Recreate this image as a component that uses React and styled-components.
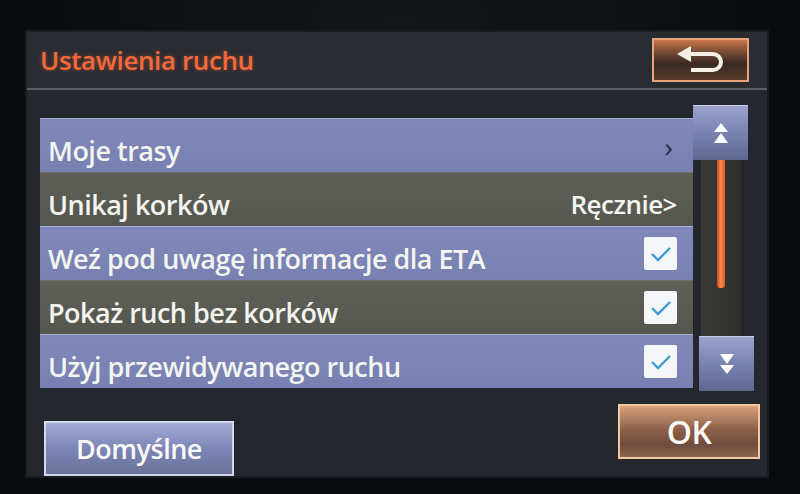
import React from 'react'
import styled, { createGlobalStyle } from 'styled-components'

const GlobalStyle = createGlobalStyle`
  html, body {
    margin: 0;
    padding: 0;
    background: #0b0c10;
  }
  body {
    font-family: "Open Sans", "Noto Sans", sans-serif;
  }
`

const Bezel = styled.div`
  width: 800px;
  height: 494px;
  background: radial-gradient(ellipse at 50% 10%, #15171c 0%, #0a0b0e 70%);
  padding: 32px 0 0 27px;
  box-sizing: border-box;
`

const Screen = styled.div`
  width: 740px;
  height: 444px;
  background: #25272e;
  display: flex;
  flex-direction: column;
  box-shadow: 0 0 0 2px #1a1b20;
`

const Header = styled.div`
  height: 58px;
  padding: 0 18px 0 13px;
  display: flex;
  align-items: center;
  justify-content: space-between;
  border-bottom: 2px solid #5d5f66;
  background: #2a2c33;
`

const Title = styled.h1`
  margin: 0;
  font-size: 26px;
  font-weight: 600;
  letter-spacing: -0.4px;
  color: #f2693a;
  text-shadow: 0 0 4px rgba(242, 105, 58, 0.45);
`

const BackButton = styled.button`
  width: 97px;
  height: 44px;
  border: 2px solid #e9a37a;
  background: linear-gradient(180deg, #c9764a 0%, #6b4430 35%, #3a2a22 60%, #5a3b2c 100%);
  display: flex;
  align-items: center;
  justify-content: center;
  padding: 0;
`

const Content = styled.div`
  display: flex;
  padding: 15px 0 0 13px;
`

const List = styled.div`
  width: 653px;
  margin-top: 13px;
  display: flex;
  flex-direction: column;
`

const Row = styled.div`
  height: 54px;
  padding: 9px 16px 0 8px;
  box-sizing: border-box;
  display: flex;
  align-items: center;
  justify-content: space-between;
  border-top: 1px solid ${p => (p.$blue ? '#a6aed6' : '#6c6e66')};
  background: ${p =>
    p.$blue
      ? 'linear-gradient(180deg, #8089b9 0%, #7780b1 100%)'
      : 'linear-gradient(180deg, #5e6058 0%, #55574f 100%)'};
`

const Label = styled.span`
  font-size: 27px;
  font-weight: 600;
  letter-spacing: -0.5px;
  color: #f4f4f0;
`

const Value = styled.span`
  font-size: 26px;
  font-weight: 600;
  letter-spacing: -0.5px;
  color: #f4f4f0;
`

const Chevron = styled.span`
  font-size: 28px;
  line-height: 1;
  color: #2c2f40;
  margin: -8px 4px 0 0;
`

const CheckBox = styled.div`
  width: 33px;
  height: 33px;
  margin-top: -9px;
  background: #f5f6f8;
  border-radius: 2px;
  display: flex;
  align-items: center;
  justify-content: center;
`

const ScrollColumn = styled.div`
  width: 62px;
  display: flex;
  flex-direction: column;
  align-items: flex-start;
`

const ScrollButton = styled.div`
  width: 55px;
  height: 54px;
  margin-left: ${p => p.$shift || 0}px;
  border-top: 1px solid #c7cde6;
  background: linear-gradient(180deg, #9aa3cc 0%, #7c86b4 45%, #5d6790 100%);
  display: flex;
  align-items: center;
  justify-content: center;
`

const Track = styled.div`
  width: 40px;
  height: 176px;
  margin-left: 8px;
  background: linear-gradient(90deg, #3a3b38 0%, #2f302e 100%);
  display: flex;
  justify-content: center;
`

const Thumb = styled.div`
  width: 8px;
  height: 128px;
  background: linear-gradient(90deg, #c9471a 0%, #ff8a4a 45%, #e2561f 100%);
  border-radius: 0 0 3px 3px;
`

const Footer = styled.div`
  display: flex;
  justify-content: space-between;
  padding: 13px 7px 0 17px;
`

const Button = styled.button`
  height: 55px;
  width: ${p => p.$width}px;
  margin-top: ${p => p.$offset || 0}px;
  font-family: inherit;
  font-size: ${p => p.$size}px;
  font-weight: 600;
  letter-spacing: -0.5px;
  color: #fbfaf6;
  border: 2px solid ${p => (p.$accent ? '#f2c9a4' : '#d3d8ee')};
  background: ${p =>
    p.$accent
      ? 'linear-gradient(180deg, #d9a27c 0%, #8e624a 45%, #6e4c3c 75%, #8a6650 100%)'
      : 'linear-gradient(180deg, #a2abd6 0%, #7c86b6 50%, #6a7298 100%)'};
  display: flex;
  align-items: center;
  justify-content: center;
  padding: 0;
`

function BackIcon() {
  return (
    <svg width="56" height="30" viewBox="0 0 56 30">
      <path d="M4 9 L18 1 L18 17 Z" fill="#f4f0e4" />
      <path
        d="M16 9 H40 A8 8 0 0 1 40 25 H18"
        fill="none"
        stroke="#f4f0e4"
        strokeWidth="4"
      />
    </svg>
  )
}

function DoubleArrow({ down }) {
  return (
    <svg width="18" height="22" viewBox="0 0 18 22" style={down ? { transform: 'rotate(180deg)' } : undefined}>
      <path d="M9 1 L16 10 L2 10 Z" fill="#ffffff" />
      <path d="M9 11 L16 21 L2 21 Z" fill="#ffffff" />
    </svg>
  )
}

function Tick() {
  return (
    <svg width="22" height="16" viewBox="0 0 22 16">
      <path d="M2 8 L8 14 L20 2" fill="none" stroke="#3b9bd3" strokeWidth="2.4" />
    </svg>
  )
}

const rows = [
  { label: 'Moje trasy', kind: 'link', blue: true },
  { label: 'Unikaj korków', kind: 'value', value: 'Ręcznie>' },
  { label: 'Weź pod uwagę informacje dla ETA', kind: 'check', blue: true },
  { label: 'Pokaż ruch bez korków', kind: 'check' },
  { label: 'Użyj przewidywanego ruchu', kind: 'check', blue: true },
]

export default function App() {
  return (
    <Bezel>
      <GlobalStyle />
      <Screen>
        <Header>
          <Title>Ustawienia ruchu</Title>
          <BackButton>
            <BackIcon />
          </BackButton>
        </Header>
        <Content>
          <List>
            {rows.map(r => (
              <Row key={r.label} $blue={r.blue}>
                <Label>{r.label}</Label>
                {r.kind === 'link' && <Chevron>›</Chevron>}
                {r.kind === 'value' && <Value>{r.value}</Value>}
                {r.kind === 'check' && (
                  <CheckBox>
                    <Tick />
                  </CheckBox>
                )}
              </Row>
            ))}
          </List>
          <ScrollColumn>
            <ScrollButton>
              <DoubleArrow />
            </ScrollButton>
            <Track>
              <Thumb />
            </Track>
            <ScrollButton $shift={6}>
              <DoubleArrow down />
            </ScrollButton>
          </ScrollColumn>
        </Content>
        <Footer>
          <Button $width={190} $offset={17} $size={27}>Domyślne</Button>
          <Button $width={142} $size={32} $accent>OK</Button>
        </Footer>
      </Screen>
    </Bezel>
  )
}
